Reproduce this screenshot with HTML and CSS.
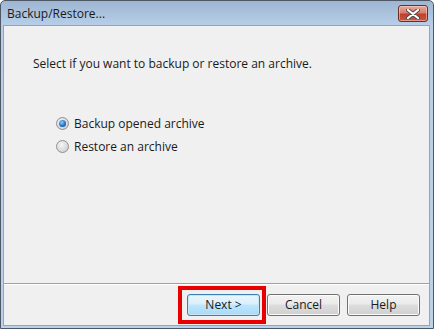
FILE: index.html
```html
<!DOCTYPE html>
<html lang="en">

<head>
  <meta charset="UTF-8">
  <title>Backup/Restore...</title>
  <link rel="stylesheet" href="styles.css">
</head>

<body>
  <div class="window">
    <header class="titlebar">
      <span class="title">Backup/Restore...</span>
      <button class="close" aria-label="Close">
        <svg width="14" height="10" viewBox="0 0 14 10">
          <path d="M2 1 L12 9 M12 1 L2 9" stroke="#4a4a4a" stroke-width="4" stroke-linecap="round" />
          <path d="M2 1 L12 9 M12 1 L2 9" stroke="#fff" stroke-width="2.2" stroke-linecap="round" />
        </svg>
      </button>
    </header>
    <main class="client">
      <section class="content">
        <p class="prompt">Select if you want to backup or restore an archive.</p>
        <ul class="options">
          <li class="option"><span class="radio checked"></span>Backup opened archive</li>
          <li class="option"><span class="radio"></span>Restore an archive</li>
        </ul>
      </section>
      <footer class="footer">
        <span class="highlight">
          <button class="btn default">Next &gt;</button>
        </span>
        <button class="btn">Cancel</button>
        <button class="btn">Help</button>
      </footer>
    </main>
  </div>
</body>

</html>
```

FILE: styles.css
```css
html {
  box-sizing: border-box;
  font-family: 'Open Sans', 'Noto Sans', sans-serif;
  font-size: 12px;
}

*,
*:after,
*:before {
  box-sizing: inherit;
}

body {
  margin: 0;
}

.window {
  width: 434px;
  height: 329px;
  border: 1px solid #4e5864;
  border-radius: 5px 5px 0 0;
  background: linear-gradient(#9fb6d2, #b8cfe9 25px, #b9d1ea);
  display: flex;
  flex-direction: column;
}

.titlebar {
  height: 24px;
  display: flex;
  align-items: center;
  justify-content: space-between;
  padding: 0 5px 0 6px;
}

.title {
  color: #1a1a1a;
  font-size: 12px;
  padding-top: 1px;
}

.close {
  width: 30px;
  height: 17px;
  margin-top: 1px;
  padding: 0;
  border: 1px solid #6b2e25;
  border-radius: 3px;
  background: linear-gradient(#e9a99a, #d3806f 45%, #c0402d 55%, #c8553f);
  box-shadow: inset 0 0 0 1px rgba(255, 220, 210, .5);
  display: flex;
  align-items: center;
  justify-content: center;
}

.client {
  flex: 1;
  margin: 0 3px 2px 2px;
  border: 1px solid #8ea6c0;
  background-color: #f0f0f0;
  display: flex;
  flex-direction: column;
}

.content {
  flex: 1;
  padding: 29px 0 0 29px;
}

.prompt {
  margin: 0;
  color: #1a1a1a;
}

.options {
  list-style: none;
  margin: 40px 0 0 23px;
  padding: 0;
}

.option {
  display: flex;
  align-items: center;
  gap: 5px;
  height: 23px;
  color: #1a1a1a;
}

.radio {
  width: 13px;
  height: 13px;
  border-radius: 50%;
  border: 1px solid #8e8f8f;
  background: radial-gradient(circle at 40% 35%, #f4f4f4, #d6d6d6 70%, #c4c4c4);
  display: flex;
  align-items: center;
  justify-content: center;
}

.radio.checked:after {
  content: '';
  width: 7px;
  height: 7px;
  border-radius: 50%;
  background: radial-gradient(circle at 40% 35%, #8ad0ff, #1d6ac2 60%, #0b3f88);
}

.footer {
  height: 42px;
  border-top: 1px solid #a0a0a0;
  box-shadow: inset 0 1px #fff;
  display: flex;
  align-items: center;
  justify-content: flex-end;
  gap: 7px;
  padding: 0 9px 0 0;
}

.btn {
  width: 73px;
  height: 22px;
  padding: 0;
  font: inherit;
  color: #1a1a1a;
  border: 1px solid #707070;
  border-radius: 3px;
  background: linear-gradient(#f2f2f2, #ebebeb 45%, #dddddd 50%, #cfcfcf);
  box-shadow: inset 0 0 0 1px #fcfcfc;
}

.btn.default {
  border-color: #3c7fb1;
  background: linear-gradient(#eaf6fd, #d9f0fc 45%, #bee6fd 50%, #a7d9f5);
  box-shadow: inset 0 0 0 1px #c7e5f7;
}

.highlight {
  position: relative;
  display: flex;
}

.highlight:after {
  content: '';
  position: absolute;
  top: -8px;
  bottom: -8px;
  left: -9px;
  right: -6px;
  border: 4px solid #e80000;
  pointer-events: none;
}
```
